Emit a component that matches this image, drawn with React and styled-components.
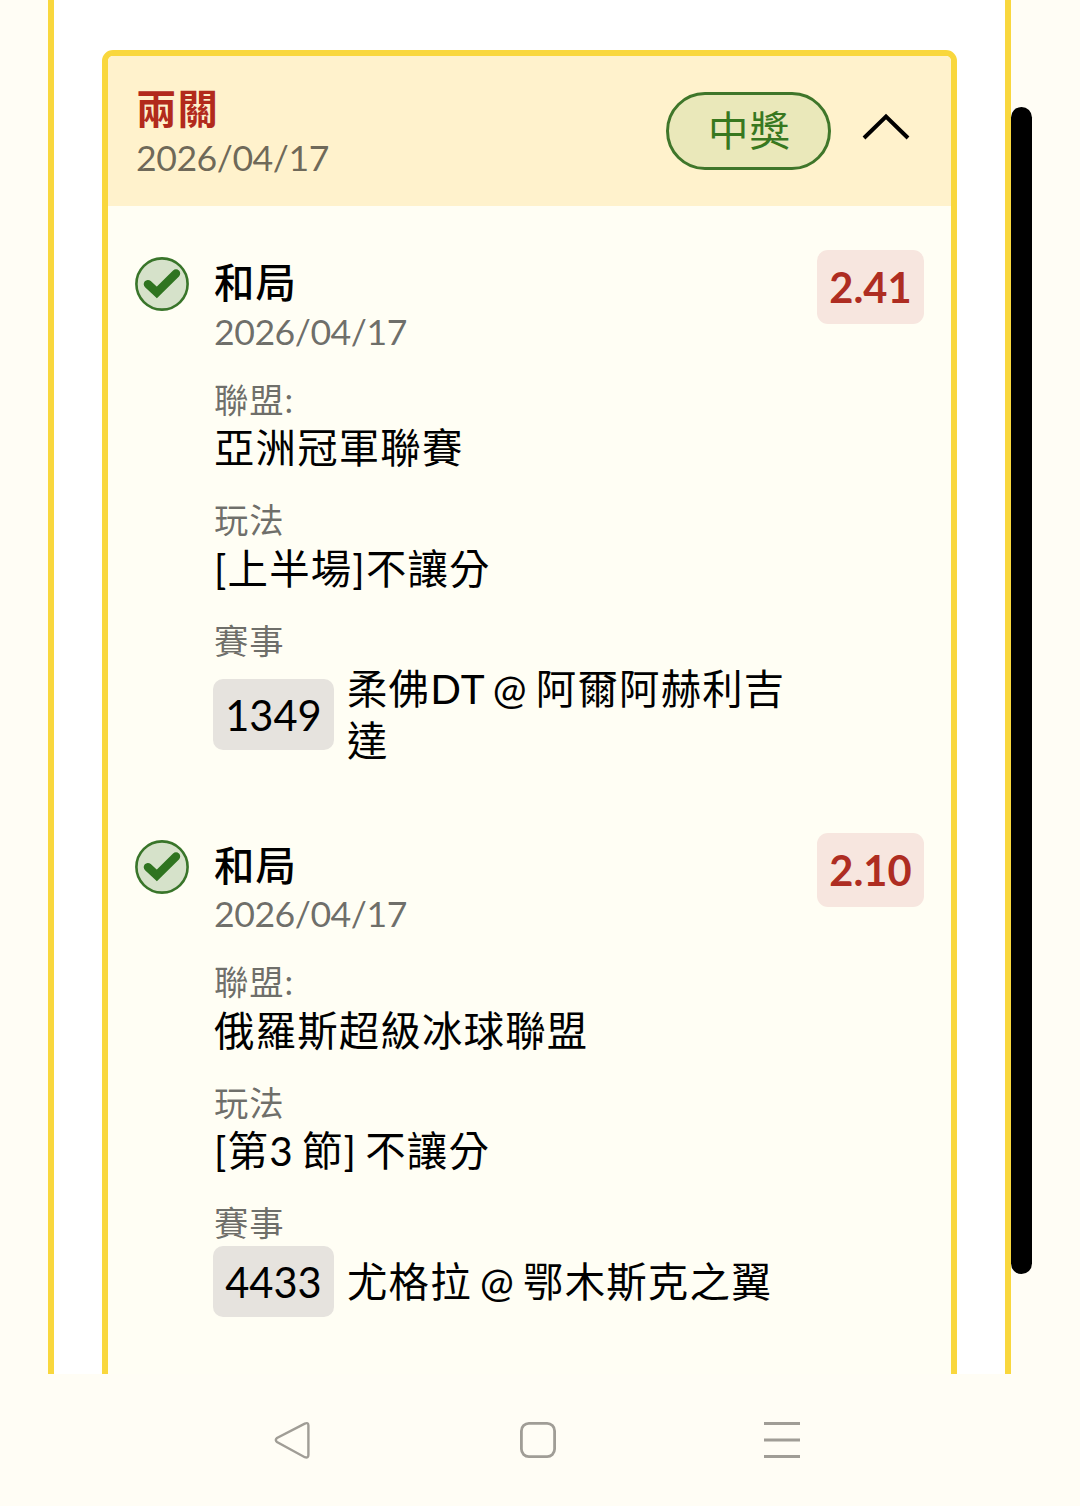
import React from "react"
import styled, {createGlobalStyle} from "styled-components"

const bets = [
    {
        id: 1,
        pick: "和局",
        date: "2026/04/17",
        odds: "2.41",
        league: "亞洲冠軍聯賽",
        play: "[上半場]不讓分",
        code: "1349",
        match: "柔佛DT @ 阿爾阿赫利吉達",
    },
    {
        id: 2,
        pick: "和局",
        date: "2026/04/17",
        odds: "2.10",
        league: "俄羅斯超級冰球聯盟",
        play: "[第3 節] 不讓分",
        code: "4433",
        match: "尤格拉 @ 鄂木斯克之翼",
    },
]

const Bet = ({bet})=>{
    return(
        <Item>
            <Status>
                <svg width="54" height="54" viewBox="0 0 54 54" fill="none">
                    <circle cx="27" cy="27" r="25.6" fill="#d6e2ca" stroke="#39752a" strokeWidth="2.6"/>
                    <path d="M12.9 27.2L21.8 35.4L41 16.4" stroke="#2f7420" strokeWidth="8.4" strokeLinecap="round"/>
                </svg>
            </Status>
            <Body>
                <Pick>{bet.pick}</Pick>
                <Date>{bet.date}</Date>
                <Field>
                    <Label>聯盟:</Label>
                    <Value>{bet.league}</Value>
                </Field>
                <Field>
                    <Label>玩法</Label>
                    <Value>{bet.play}</Value>
                </Field>
                <Field>
                    <Label>賽事</Label>
                    <Match>
                        <Code>{bet.code}</Code>
                        <Value>{bet.match}</Value>
                    </Match>
                </Field>
            </Body>
            <Odds>{bet.odds}</Odds>
        </Item>
    )
}

const App = ()=>{
    return(
        <Page>
            <GlobalStyle/>
            <Screen>
                <Panel>
                    <Card>
                        <CardHeader>
                            <div>
                                <CardTitle>兩關</CardTitle>
                                <Date>2026/04/17</Date>
                            </div>
                            <Result>中獎</Result>
                            <Chevron width="48" height="28" viewBox="0 0 48 28" fill="none">
                                <path d="M2 25L24 3.5L46 25" stroke="#000" strokeWidth="4"/>
                            </Chevron>
                        </CardHeader>
                        <List>
                            {bets.map((bet)=>(
                                <Bet key={bet.id} bet={bet}/>
                            ))}
                        </List>
                    </Card>
                </Panel>
                <ScrollThumb/>
            </Screen>
            <NavBar>
                <svg width="38" height="38" viewBox="0 0 38 38" fill="none">
                    <path d="M30.8 2.6L3 17Q0.6 19 3 21L30.8 36.2Q34.4 37.4 34.4 34V4.6Q34.4 1 30.8 2.6Z" stroke="#a09d96" strokeWidth="2.4"/>
                </svg>
                <svg width="36" height="36" viewBox="0 0 36 36" fill="none">
                    <rect x="1.4" y="1.4" width="33.2" height="33.2" rx="7.5" stroke="#a09d96" strokeWidth="2.8"/>
                </svg>
                <svg width="36" height="36" viewBox="0 0 36 36" fill="none">
                    <path d="M0 1.5H36M0 18H36M0 34.5H36" stroke="#a09d96" strokeWidth="3"/>
                </svg>
            </NavBar>
        </Page>
    )
}
export default App

const GlobalStyle = createGlobalStyle`
*{
    box-sizing: border-box;
}
body{
    margin: 0;
    background-color: #fffdf5;
}
svg{
    display: block;
}
`
const Page = styled.div`
display: flex;
flex-direction: column;
width: 1080px;
height: 1506px;
overflow: hidden;
background-color: #fffdf5;
color: #000;
font-family: Lato, "Noto Sans CJK TC", sans-serif;
font-size: 40.4px;
line-height: 51.5px;
letter-spacing: 1.2px;
word-spacing: -3.4px;
`
const Screen = styled.div`
display: flex;
height: 1374px;
padding-left: 48px;
overflow: hidden;
`
const Panel = styled.div`
width: 963px;
padding: 50px 48px 0;
border: solid #f9d73d;
border-width: 0 6px;
background-color: #fff;
`
const ScrollThumb = styled.div`
width: 21px;
height: 1167px;
margin-top: 107px;
border-radius: 11px;
background-color: #000;
`
const Card = styled.div`
height: 1400px;
border: 6px solid #f9d73d;
border-radius: 11px;
background-color: #fffef4;
overflow: hidden;
`
const CardHeader = styled.div`
display: flex;
height: 150px;
padding: 28px 41px 0 28px;
background-color: #fff2cc;
`
const CardTitle = styled.div`
padding-bottom: 1.5px;
font-weight: 700;
line-height: 50px;
color: #b22a1c;
`
const Date = styled.div`
height: 44.5px;
margin-top: -1px;
font-size: 35.7px;
line-height: 45px;
letter-spacing: -0.5px;
color: rgba(0, 0, 0, 0.58);
`
const Result = styled.div`
width: 165px;
height: 78px;
margin: 8px 0 0 auto;
padding-left: 2px;
border: 3px solid #3f762a;
border-radius: 39px;
background-color: #eae8ba;
color: #38781f;
line-height: 72px;
text-align: center;
`
const Chevron = styled.svg`
margin: 29px 0 0 31px;
`
const List = styled.div`
display: flex;
flex-direction: column;
gap: 74.5px;
padding: 52px 27px 0;
`
const Item = styled.div`
display: flex;
align-items: flex-start;
`
const Status = styled.div`
width: 79px;
margin-top: -1px;
`
const Body = styled.div`
width: 577px;
`
const Pick = styled.div`
padding-bottom: 1.5px;
font-weight: 500;
line-height: 50px;
`
const Field = styled.div`
margin-top: 24.5px;
`
const Label = styled.div`
font-size: 34.4px;
line-height: 44.5px;
letter-spacing: 0.8px;
color: rgba(0, 0, 0, 0.58);
`
const Value = styled.div`
flex: 1;
`
const Match = styled.div`
display: flex;
align-items: center;
gap: 13px;
margin-left: -1px;
`
const Code = styled.div`
width: 121px;
height: 71.5px;
border-radius: 10px;
background-color: #e6e3de;
font-size: 41.6px;
line-height: 72px;
letter-spacing: 0;
text-align: center;
`
const Odds = styled.div`
width: 107px;
height: 74px;
margin: -8px 0 0 auto;
border-radius: 11px;
background-color: #f7e6df;
color: #ae2d22;
font-size: 41.6px;
font-weight: 700;
line-height: 74px;
letter-spacing: 0;
text-align: center;
`
const NavBar = styled.div`
display: flex;
align-items: center;
justify-content: space-between;
height: 132px;
padding: 0 280px 0 274px;
`
